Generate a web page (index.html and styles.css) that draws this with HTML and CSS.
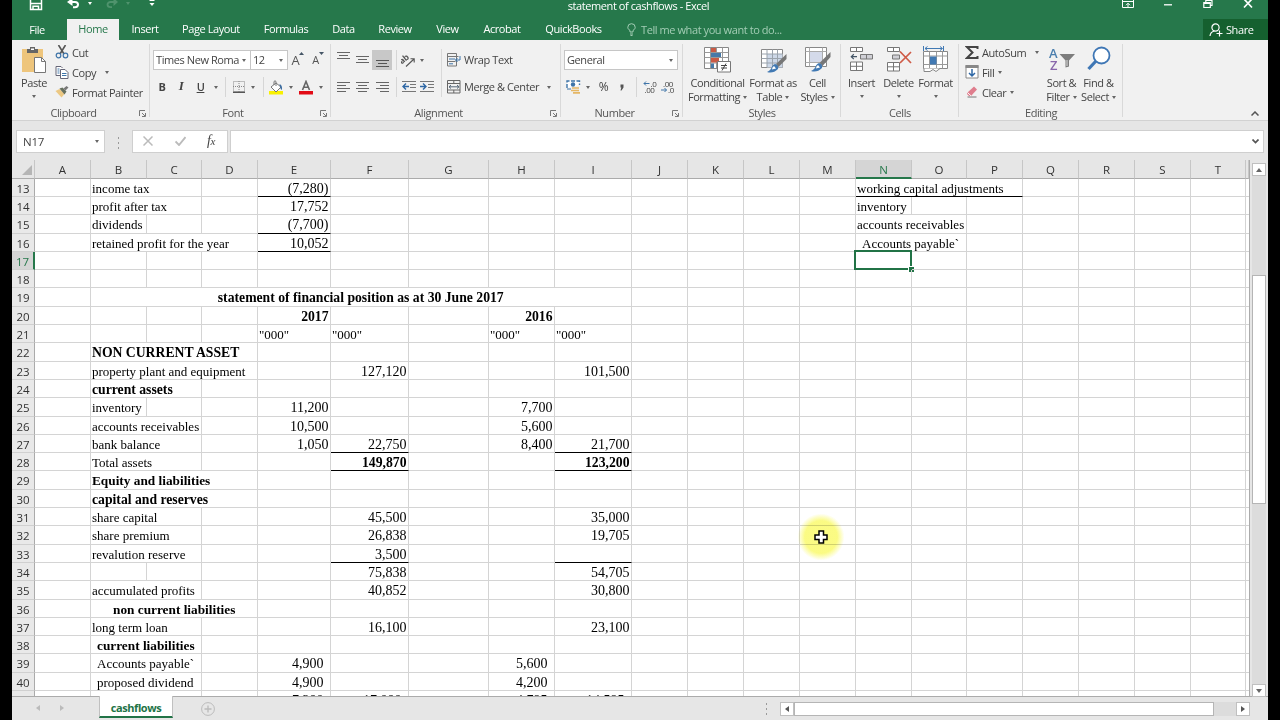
FILE: index.html
```html
<!DOCTYPE html>
<html lang="en">
<head>
    <meta charset="utf-8">
    <title>statement of cashflows - Excel</title>
    <link rel="stylesheet" href="styles.css">
</head>
<body>
<div class="app">

    <!-- title bar -->
    <div class="titlebar">
        <div class="quick">
            <svg width="14" height="19" viewBox="0 0 14 19"><path d="M1.5 -1V9.500H12.500V-1M1.500 3.500H12.500" fill="none" stroke="#fff" stroke-width="1.500"/><path d="M4 9.500V6.200h5.500v3.300" fill="none" stroke="#fff" stroke-width="1.500"/></svg>
            <svg class="undo" width="14" height="19" viewBox="0 0 14 19"><path d="M2.500 2H8a3 2.600 0 0 1 0 5.200H6" fill="none" stroke="#fff" stroke-width="2"/><path d="M0 2L5.500 -2V6z" fill="#fff"/></svg>
            <i class="caret white"></i>
            <svg class="redo" width="14" height="19" viewBox="0 0 14 19"><path d="M11 2H5.500a3 2.600 0 0 0 0 5.200H7" fill="none" stroke="#4f936d" stroke-width="1.800"/><path d="M13 2L8.500 -2V6z" fill="#4f936d"/></svg>
            <i class="caret faded"></i>
            <svg class="more" width="6" height="8" viewBox="0 0 6 8"><path d="M0.500 1.500h5" stroke="#fff"/><path d="M0.500 4h5L3 7z" fill="#fff"/></svg>
        </div>
        <div class="title">statement of cashflows - Excel</div>
        <div class="window">
            <svg width="12" height="19" viewBox="0 0 12 19"><path d="M.500 -.500h11v8H.500zM.500 1.500h11" fill="none" stroke="#fff"/><path d="M6 7V3.500M4 5.200l2-2 2 2" fill="none" stroke="#fff"/></svg>
            <svg width="10" height="19" viewBox="0 0 10 19"><path d="M1 4.800h8" stroke="#fff" stroke-width="1.300"/></svg>
            <svg width="10" height="19" viewBox="0 0 10 19"><path d="M.800 2.500h6.500v5H.800zM.800 3.300h6.500M2.800 2V.500h6.200v5H7.500" fill="none" stroke="#fff" stroke-width="1.200"/></svg>
            <svg width="10" height="19" viewBox="0 0 10 19"><path d="M1 -1L9 7.500M9 -1L1 7.500" stroke="#fff" stroke-width="1.700"/></svg>
        </div>
    </div>

    <!-- ribbon tabs -->
    <div class="tabs">
        <div class="tab file">File</div>
        <div class="tab active">Home</div>
        <div class="tab">Insert</div>
        <div class="tab">Page Layout</div>
        <div class="tab">Formulas</div>
        <div class="tab">Data</div>
        <div class="tab">Review</div>
        <div class="tab">View</div>
        <div class="tab">Acrobat</div>
        <div class="tab">QuickBooks</div>
        <div class="tell">
            <svg width="9" height="13" viewBox="0 0 9 13"><path d="M3 9V7.500C1.500 6.500.800 5.500.800 4.300a3.700 3.600 0 0 1 7.400 0C8.200 5.500 7.500 6.500 6 7.500V9zM3 11h3M3.500 12.500h2" fill="none" stroke="#a3cdb5"/></svg>
            <span>Tell me what you want to do...</span>
        </div>
        <div class="share">
            <svg width="14" height="14" viewBox="0 0 14 14"><circle cx="6.500" cy="4.500" r="3.600" fill="none" stroke="#fff" stroke-width="1.200"/><path d="M1 13c.300-3 2-4.500 4.500-5M10.500 7.500v6M7.500 10.500h6" fill="none" stroke="#fff" stroke-width="1.200"/></svg>
            <span>Share</span>
        </div>
    </div>

    <!-- ribbon -->
    <div class="ribbon">
        <div class="group clipboard">
            <div class="tools">
                <div class="big">
                    <svg width="26" height="27" viewBox="0 0 26 27"><path d="M1 3h21v23H1z" fill="#eec57c"/><path d="M6 3h3V1h5v2h3v4H6z" fill="#666"/><path d="M10 2.500h3v1.500h-3z" fill="#fff"/><path d="M13.500 11.500h7l4 4v11h-11z" fill="#fff" stroke="#777"/><path d="M20.500 11.500v4h4" fill="none" stroke="#777"/></svg>
                    <span>Paste</span>
                    <i class="caret"></i>
                </div>
                <div class="stack">
                    <div class="line"><svg width="13" height="14" viewBox="0 0 13 14"><path d="M3 0l5.500 9M10 0L4.500 9" stroke="#555" stroke-width="1.600"/><circle cx="3" cy="10.500" r="2.300" fill="none" stroke="#3e74a8" stroke-width="1.200"/><circle cx="10" cy="10.500" r="2.300" fill="none" stroke="#3e74a8" stroke-width="1.200"/></svg><span>Cut</span></div>
                    <div class="line"><svg width="14" height="13" viewBox="0 0 14 13"><path d="M6 9.500H1V.500h5l1.500 1.500" fill="#fff" stroke="#667"/><path d="M2.500 3h2M2.500 5h2M2.500 7h2" stroke="#3e74a8"/><path d="M5.500 3.500h4.500l3 3v6H5.500z" fill="#fff" stroke="#667"/><path d="M7 7.500h4.500M7 9.500h4.500" stroke="#3e74a8"/></svg><span>Copy</span><i class="caret copy"></i></div>
                    <div class="line"><svg width="13" height="12" viewBox="0 0 13 12"><path d="M0 5l4-2 5 5-3 3.500z" fill="#ecc883"/><path d="M4 2.500l3-1 4 4-2 3z" fill="#66705f"/><path d="M8 2.500L11 0l2 1.500-3 3z" fill="#777"/></svg><span>Format Painter</span></div>
                </div>
            </div>
            <div class="label"><span>Clipboard</span><svg class="corner" width="7" height="7" viewBox="0 0 7 7"><path d="M.500 6V.500H6M3 3l3 3M6.500 3v3.500H3" fill="none" stroke="#777"/></svg></div>
        </div>

        <div class="group font">
            <div class="tools rows">
                <div class="row font-top">
                    <div class="combo"><span>Times New Roma</span><i class="caret"></i></div>
                    <div class="combo size"><span>12</span><i class="caret"></i></div>
                    <div class="grow">A<svg width="5" height="4" viewBox="0 0 5 4"><path d="M0 3l2.500-3L5 3z" fill="#456"/></svg></div>
                    <div class="grow small">A<svg width="5" height="4" viewBox="0 0 5 4"><path d="M0 0l2.500 3L5 0z" fill="#456"/></svg></div>
                </div>
                <div class="row font-bottom">
                    <b>B</b><em>I</em><u>U</u><i class="caret"></i><i class="sep"></i>
                    <svg width="12" height="12" viewBox="0 0 12 12"><path d="M.500 .500h11v10H.500zM6 0v11M0 5.500h12" fill="none" stroke="#888" stroke-dasharray="1 1"/><path d="M0 11.300h12" stroke="#555" stroke-width="1.400"/></svg>
                    <i class="caret"></i><i class="sep"></i>
                    <svg width="15" height="15" viewBox="0 0 15 15"><path d="M0 11h14v3.500H0z" fill="#f8f000"/><path d="M2 7l5-4 5 4-5 5z" fill="#fff" stroke="#777"/><path d="M5 5V1.500q1-1.500 2 0V6" fill="none" stroke="#777"/><path d="M10.500 4q3 1 2.500 6-1.500 0-2-3z" fill="#3e6da0"/></svg>
                    <i class="caret"></i>
                    <svg width="14" height="15" viewBox="0 0 14 15"><path d="M3.500 10L7 1.500 10.500 10M4.800 7.300h4.500" fill="none" stroke="#666" stroke-width="1.600"/><path d="M0 11h14v3.500H0z" fill="#e20b16"/></svg>
                    <i class="caret"></i>
                </div>
            </div>
            <div class="label"><span>Font</span><svg class="corner" width="7" height="7" viewBox="0 0 7 7"><path d="M.500 6V.500H6M3 3l3 3M6.500 3v3.500H3" fill="none" stroke="#777"/></svg></div>
        </div>

        <div class="group align">
            <div class="tools">
                <div class="rows align-left">
                    <div class="row align-top">
                        <svg width="13" height="20" viewBox="0 0 13 20"><path d="M0 2.500h13M2 5.500h9M0 8.500h13" stroke="#666"/></svg>
                        <svg width="13" height="20" viewBox="0 0 13 20"><path d="M0 6.500h13M2 9.500h9M0 12.500h13" stroke="#666"/></svg>
                        <span class="pressed"><svg width="13" height="20" viewBox="0 0 13 20"><path d="M0 10.500h13M2 13.500h9M0 16.500h13" stroke="#555"/></svg></span>
                        <i class="sep"></i>
                        <svg width="15" height="13" viewBox="0 0 15 13"><text x="0" y="8" font-size="8.500" font-weight="bold" fill="#555" transform="rotate(-38 4 8)">ab</text><path d="M5 12.500L13 5M9.500 4.800h3.700v3.700" fill="none" stroke="#555" stroke-width="1.100"/></svg>
                        <i class="caret"></i>
                    </div>
                    <div class="row align-bottom">
                        <svg width="13" height="11" viewBox="0 0 13 11"><path d="M0 .500h13M0 3.500h9M0 6.500h13M0 9.500h9" stroke="#666"/></svg>
                        <svg width="13" height="11" viewBox="0 0 13 11"><path d="M0 .500h13M2 3.500h9M0 6.500h13M2 9.500h9" stroke="#666"/></svg>
                        <svg width="13" height="11" viewBox="0 0 13 11"><path d="M0 .500h13M4 3.500h9M0 6.500h13M4 9.500h9" stroke="#666"/></svg>
                        <i class="sep"></i>
                        <svg width="14" height="12" viewBox="0 0 14 12"><path d="M0 .500h14M8 3.500h6M8 6.500h6M0 10.500h14" stroke="#777"/><path d="M1 5.500h6M4 2.500l-3 3 3 3" fill="none" stroke="#2e67a5" stroke-width="1.400"/></svg>
                        <svg width="14" height="12" viewBox="0 0 14 12"><path d="M0 .500h14M8 3.500h6M8 6.500h6M0 10.500h14" stroke="#777"/><path d="M0 5.500h6M3 2.500l3 3-3 3" fill="none" stroke="#2e67a5" stroke-width="1.400"/></svg>
                    </div>
                </div>
                <div class="rows align-right">
                    <div class="row wrap"><svg width="14" height="14" viewBox="0 0 14 14"><path d="M.500 .500h9v12.500h-9zM.500 3.500h11M.500 8.500h8" fill="none" stroke="#777"/><path d="M2 6h6M2 10.800h4" stroke="#3e74a8"/><path d="M13 3v4H8.500M10.500 5l-2 2 2 2" fill="none" stroke="#3e74a8"/></svg><span>Wrap Text</span></div>
                    <div class="row wrap"><svg width="14" height="14" viewBox="0 0 14 14"><path d="M.500 .500h12.500v12.500H.500zM.500 3.500h12.500M.500 10h12.500M6.800 .500v3M6.800 10v3" fill="none" stroke="#666"/><path d="M2 6.800h10M4 5L2 6.800 4 8.500M10 5l2 1.800L10 8.500" fill="none" stroke="#567"/></svg><span>Merge &amp; Center</span><i class="caret"></i></div>
                </div>
            </div>
            <div class="label"><span>Alignment</span><svg class="corner" width="7" height="7" viewBox="0 0 7 7"><path d="M.500 6V.500H6M3 3l3 3M6.500 3v3.500H3" fill="none" stroke="#777"/></svg></div>
        </div>

        <div class="group number">
            <div class="tools rows">
                <div class="row"><div class="combo general"><span>General</span><i class="caret"></i></div></div>
                <div class="row number-bottom">
                    <svg width="15" height="14" viewBox="0 0 15 14"><path d="M1 8V1h12.500v4" fill="#fff" stroke="#3e74a8" stroke-width="1.400" stroke-dasharray="4 1.500"/><circle cx="7" cy="4.500" r="2.200" fill="#3e74a8"/><path d="M6 8h7M5 10.500h8M7 12.800h7" stroke="#e5b765" stroke-width="1.700"/><path d="M1 9h4" stroke="#3e74a8"/></svg>
                    <i class="caret"></i>
                    <span class="percent">%</span>
                    <svg width="4" height="7" viewBox="0 0 4 7"><path d="M.500 .500h3v3L1.500 6.500H.500l.800-3H.500z" fill="#555"/></svg>
                    <i class="sep"></i>
                    <svg width="14" height="14" viewBox="0 0 14 14"><text x="7.500" y="6.500" font-size="8" fill="#444">.0</text><text x="1.500" y="13" font-size="8" fill="#444">.00</text><path d="M1 3.500h5.500M3 1.500l-2 2 2 2" fill="none" stroke="#3e74a8"/></svg>
                    <svg width="14" height="14" viewBox="0 0 14 14"><text x="2" y="6.500" font-size="8" fill="#444">.00</text><text x="7" y="13" font-size="8" fill="#444">.0</text><path d="M0 10h5.500M3.500 8l2 2-2 2" fill="none" stroke="#3e74a8"/></svg>
                </div>
            </div>
            <div class="label"><span>Number</span><svg class="corner" width="7" height="7" viewBox="0 0 7 7"><path d="M.500 6V.500H6M3 3l3 3M6.500 3v3.500H3" fill="none" stroke="#777"/></svg></div>
        </div>

        <div class="group styles">
            <div class="tools">
                <div class="big">
                    <svg width="27" height="27" viewBox="0 0 27 27"><path d="M.500 1.500h24v21H.500z" fill="#fff" stroke="#888"/><path d="M.500 6.500h24M.500 11.500h24M.500 17h24M6.500 1.500v21M12.500 1.500v21M18.500 1.500v21" stroke="#999"/><path d="M7 2h5v4H7z" fill="#ca5b45"/><path d="M7 7h10v4H7z" fill="#4779a8"/><path d="M7 12h8v4.500H7z" fill="#ca5b45"/><path d="M7 17.500h3v4.500H7z" fill="#4779a8"/><path d="M13.500 15.500h13v10.500h-13z" fill="#fff" stroke="#777"/><path d="M17 19.500h6M17 22h6M22 17.500l-4 7" stroke="#444"/></svg>
                    <span>Conditional<br>Formatting<i class="caret"></i></span>
                </div>
                <div class="big">
                    <svg width="27" height="27" viewBox="0 0 27 27"><path d="M1.500 3.500h21v18h-21z" fill="#fff" stroke="#888"/><path d="M7 8h15.500v13.500H7z" fill="#cdd8e8"/><path d="M1.500 8h21M1.500 12.500h21M1.500 17h21M7 3.500v18M12.500 3.500v18M17.500 3.500v18" stroke="#9aa3ad"/><path d="M26.500 8v5l-8 8-2.500-3z" fill="#777"/><path d="M15 18q4 1 3 5-5 5-11 3 4-2 5-5.500 1-2 3-2.500z" fill="#4179b3"/><path d="M14 20q-2 1-2 3.500l4-1z" fill="#fff"/></svg>
                    <span>Format as<br>Table<i class="caret"></i></span>
                </div>
                <div class="big">
                    <svg width="27" height="27" viewBox="0 0 27 27"><path d="M1.500 1.500h21v19h-21z" fill="#fff" stroke="#888"/><path d="M5.500 5.500h13v11h-13z" fill="#d4daea" stroke="#999"/><path d="M1.500 5.500h21M1.500 16.500h21M5.500 1.500v19M18.500 1.500v19" stroke="#aaa"/><path d="M26.500 6v5l-8 9-3-3z" fill="#777"/><path d="M15 17q4 1 3 5-5 5-11 3 4-2 5-5.500 1-2 3-2.500z" fill="#4179b3"/><path d="M14 19q-2 1-2 3.500l4-1z" fill="#fff"/></svg>
                    <span>Cell<br>Styles<i class="caret"></i></span>
                </div>
            </div>
            <div class="label"><span>Styles</span></div>
        </div>

        <div class="group cells">
            <div class="tools">
                <div class="big">
                    <svg width="25" height="27" viewBox="0 0 25 27"><path d="M1.500 1.500h12v4h-12zM7.500 1.500v4M1.500 16h12v8.500h-12zM7.500 16v8.500M1.500 20.300h12" fill="#fff" stroke="#777"/><path d="M11.500 8.500h12v4.500h-12zM17.500 8.500V13" fill="#d0d0d6" stroke="#777"/><path d="M2 10.700h6M4.800 8.300L2.300 10.700l2.500 2.400" fill="none" stroke="#456" stroke-width="1.200"/></svg>
                    <span>Insert</span><i class="caret"></i>
                </div>
                <div class="big">
                    <svg width="27" height="27" viewBox="0 0 27 27"><path d="M2.500 1.500h12v4h-12zM8.500 1.500v4M2.500 16.500h12v8.500h-12zM8.500 16.500V25M2.500 20.800h12" fill="#fff" stroke="#777"/><path d="M7.500 9h7v4h-7z" fill="#d0d0d6" stroke="#777"/><path d="M15 5.500l11 11.500M26 6L15 17" stroke="#cf5b47" stroke-width="1.700"/></svg>
                    <span>Delete</span><i class="caret"></i>
                </div>
                <div class="big">
                    <svg width="26" height="27" viewBox="0 0 26 27"><path d="M.500 5.500h24v17H.500z" fill="#fff" stroke="#888"/><path d="M.500 10h24M.500 18.500h24M6.500 5.500v17M13.500 5.500v17M19.500 5.500v17" stroke="#999"/><path d="M7 10.500h6.500v8H7z" fill="#4179b3"/><path d="M2 2.500h17M4.500 .500L2 2.500l2.500 2M17 .500l2.500 2-2.500 2M.500 0v5M20.500 0v5" fill="none" stroke="#4179b3"/><path d="M1 22.500v3h6l3-2 3 2 4-3" fill="#fff" stroke="#888"/></svg>
                    <span>Format</span><i class="caret"></i>
                </div>
            </div>
            <div class="label"><span>Cells</span></div>
        </div>

        <div class="group editing">
            <div class="tools">
                <div class="stack">
                    <div class="line"><svg width="13" height="13" viewBox="0 0 13 13"><path d="M12 3V1H1.500L7 6.500 1.500 12H12v-2" fill="none" stroke="#444" stroke-width="2"/></svg><span>AutoSum</span><i class="caret auto"></i></div>
                    <div class="line"><svg width="13" height="14" viewBox="0 0 13 14"><path d="M.500 .500h12v12.500H.500z" fill="#fff" stroke="#888"/><path d="M0 0h13v3H0z" fill="#888"/><path d="M6.500 4v7M3.500 8l3 3 3-3" fill="none" stroke="#2e67a5" stroke-width="1.500"/></svg><span>Fill</span><i class="caret"></i></div>
                    <div class="line"><svg width="13" height="12" viewBox="0 0 13 12"><path d="M2 6.500L8.500 .500l3 3L5.500 10H3.500L1.500 8z" fill="#df7d8d"/><path d="M2 6.500l3.500 3.300" stroke="#fff"/><path d="M2 11h9" stroke="#777"/></svg><span>Clear</span><i class="caret"></i></div>
                </div>
                <div class="big">
                    <svg width="27" height="27" viewBox="0 0 27 27"><text x="1" y="11.500" font-size="13" font-weight="600" fill="#4b7fae">A</text><text x="2" y="24" font-size="13" font-weight="600" fill="#8967ab">Z</text><path d="M11.500 8h15.500l-6 6.500v6l-3.500 1v-7z" fill="#7d7d7d"/><path d="M19 14v6" stroke="#ddd"/></svg>
                    <span>Sort &amp;<br>Filter<i class="caret"></i></span>
                </div>
                <div class="big">
                    <svg width="26" height="27" viewBox="0 0 26 27"><circle cx="15.500" cy="9.500" r="8" fill="#fff" stroke="#3f77b5" stroke-width="1.800"/><path d="M10 15L2.500 23" stroke="#3f77b5" stroke-width="3.200"/></svg>
                    <span>Find &amp;<br>Select<i class="caret"></i></span>
                </div>
            </div>
            <div class="label"><span>Editing</span></div>
        </div>
        <svg class="collapse" width="8" height="5" viewBox="0 0 8 5"><path d="M.500 4.500L4 1l3.500 3.500" fill="none" stroke="#555" stroke-width="1.500"/></svg>
    </div>

    <!-- formula bar -->
    <div class="formula">
        <div class="namebox"><span>N17</span><i class="caret"></i></div>
        <div class="dots"><i></i><i></i><i></i></div>
        <div class="fx">
            <svg width="10" height="10" viewBox="0 0 10 10"><path d="M.500 .500l9 9M9.500 .500l-9 9" stroke="#bbb" stroke-width="1.500"/></svg>
            <svg width="11" height="10" viewBox="0 0 11 10"><path d="M.500 5.500L4 9l6.500-8" fill="none" stroke="#bbb" stroke-width="1.900"/></svg>
            <span>f<small>x</small></span>
        </div>
        <div class="input"><svg width="7" height="5" viewBox="0 0 7 5"><path d="M.500 .500l3 3 3-3" fill="none" stroke="#555" stroke-width="1.700"/></svg></div>
    </div>

    <!-- sheet -->
    <div class="sheet">
        <div class="grid" id="grid"></div>
        <div class="vscroll">
            <div class="arrow"><i class="up"></i></div>
            <div class="track"><div class="thumb"></div></div>
            <div class="arrow"><i class="down"></i></div>
        </div>
        <div class="pointer">
            <svg width="14" height="14" viewBox="0 0 14 14"><path d="M5 1h4.500v4H13v4.500H9.500V13H5V9.500H1V5h4z" fill="#fff" stroke="#000" stroke-width="1.500"/></svg>
        </div>
    </div>

    <!-- sheet tabs -->
    <div class="bottom">
        <i class="prev"></i><i class="next"></i>
        <div class="sheet-tab">cashflows</div>
        <svg class="add" width="14" height="14" viewBox="0 0 14 14"><circle cx="7" cy="7" r="6.400" fill="none" stroke="#bbb"/><path d="M7 3.500v7M3.500 7h7" stroke="#bbb" stroke-width="1.300"/></svg>
        <div class="dots"><i></i><i></i><i></i></div>
        <div class="hscroll">
            <div class="arrow"><i class="left"></i></div>
            <div class="thumb"></div>
            <div class="arrow end"><i class="right"></i></div>
        </div>
    </div>
</div>
<script src="sheet.js"></script>
</body>
</html>
```
FILE: styles.css
```css
* {
    box-sizing: border-box;
}
body {
    margin: 0;
    background: #000;
    font-family: "Open Sans", "Noto Sans", sans-serif;
    font-size: 11px;
    letter-spacing: -.42px;
    color: #444;
    overflow: hidden;
}
svg {
    display: block;
    flex-shrink: 0;
}
.app {
    width: 1256px;
    height: 720px;
    margin: 0 12px;
    background: #e6e6e6;
    overflow: hidden;
    display: flex;
    flex-direction: column;
}

/* small drop-down triangle */
.caret {
    display: inline-block;
    flex-shrink: 0;
    border: 2.5px solid transparent;
    border-top: 3px solid #666;
    border-bottom: 0;
}
.caret.white {
    border-top-color: #fff;
}
.caret.faded {
    border-top-color: #4f936d;
}
.sep {
    width: 1px;
    height: 20px;
    background: #d6d6d6;
}

/* title bar */
.titlebar {
    height: 19px;
    background: #26784b;
    display: grid;
    grid-template-columns: 300px 1fr 300px;
    color: #fff;
}
.quick {
    display: flex;
    padding-left: 17px;
}
.quick .caret {
    margin: 2px 0 0 7px;
}
.undo {
    margin-left: 24px;
}
.redo {
    margin-left: 13px;
}
.more {
    margin: -1px 0 0 19px;
}
.title {
    text-align: center;
    line-height: 11px;
    padding-right: 3px;
    white-space: nowrap;
}
.window {
    display: flex;
    justify-content: flex-end;
    padding-right: 15px;
}
.window svg {
    margin-left: 30px;
}
.window svg:nth-child(2) {
    margin-left: 29px;
}

/* tabs */
.tabs {
    height: 21px;
    flex-shrink: 0;
    background: #26784b;
    display: grid;
    grid-template-columns: 55px 52px 52px 80px 70px 45px 58px 47px 62px 81px 1fr 65px;
    line-height: 20px;
    color: #fff;
}
.tab {
    text-align: center;
    white-space: nowrap;
}
.tab.file {
    padding: 1px 5px 0 0;
}
.tab.active {
    background: #f1f1f1;
    color: #26784b;
}
.tell {
    display: flex;
    align-items: center;
    padding-left: 13px;
    color: #a3cdb5;
}
.tell span {
    margin-left: 5px;
}
.share {
    background: #15602f;
    display: flex;
    align-items: center;
    padding-left: 6px;
}
.share span {
    margin-left: 3px;
}

/* ribbon */
.ribbon {
    height: 81px;
    flex-shrink: 0;
    background: #f1f1f1;
    border-bottom: 1px solid #d2d2d2;
    display: flex;
}
.group {
    height: 80px;
    display: flex;
    flex-direction: column;
    position: relative;
}
.group::after {
    content: "";
    position: absolute;
    right: 0;
    top: 4px;
    width: 1px;
    height: 73px;
    background: #d9d9d9;
}
.clipboard { width: 138px; }
.font { width: 181px; }
.align { width: 230px; }
.number { width: 122px; }
.styles { width: 158px; }
.cells { width: 118px; }
.editing { width: 164px; }
.tools {
    height: 66px;
    display: flex;
}
.label {
    height: 14px;
    line-height: 14px;
    text-align: center;
    position: relative;
    color: #555;
}
.clipboard .label, .font .label, .align .label, .number .label {
    padding-right: 15px;
}
.corner {
    position: absolute;
    right: 4px;
    top: 4px;
}
.rows {
    flex-direction: column;
    gap: 7px;
    padding: 10px 0 0 3px;
}
.row {
    height: 20px;
    display: grid;
    align-items: center;
    justify-items: center;
}
.row span, .row b, .row u, .row em {
    padding-bottom: 2px;
}
.big {
    display: flex;
    flex-direction: column;
    align-items: center;
    padding-top: 6px;
    line-height: 14px;
    text-align: center;
    white-space: nowrap;
}
.big span {
    margin-top: 3px;
}
.big > .caret {
    margin-top: 5px;
}
.big span .caret {
    margin: 0 0 2px 3px;
}
.stack {
    padding-top: 2px;
}
.line {
    height: 20px;
    display: flex;
    align-items: center;
    white-space: nowrap;
}
.line svg {
    width: 14px;
}
.line span {
    margin-left: 3px;
}
.line .caret {
    margin-left: 4px;
}
.line .caret.copy, .line .caret.auto {
    margin-left: 9px;
}
.clipboard .big {
    width: 43px;
    padding-left: 1px;
}
.combo {
    height: 20px;
    width: 100%;
    background: #fff;
    border: 1px solid #c6c6c6;
    display: flex;
    align-items: center;
    justify-content: space-between;
    padding: 0 4px 0 2px;
    white-space: nowrap;
}
.combo.size {
    border-left: 0;
}
.general {
    width: 114px;
    justify-self: start;
}
.font-top {
    grid-template-columns: 98px 37px 20px 20px;
}
.grow {
    display: flex;
    font-size: 13px;
    line-height: 20px;
    color: #555;
}
.grow.small {
    font-size: 11px;
}
.grow svg {
    margin-top: 2px;
}
.font-bottom {
    grid-template-columns: 18px 20px 19px 11px 9px 17px 12px 8px 19px 9px 21px 9px;
}
.font-bottom em {
    font-family: "Liberation Serif", serif;
    font-weight: bold;
    font-size: 13px;
}
.font-bottom u {
    font-weight: 600;
}
.align-left {
    display: flex;
    width: 110px;
}
.align-top {
    grid-template-columns: 18px 20px 20px 8px 17px 10px;
}
.align-bottom {
    grid-template-columns: 18px 20px 20px 8px 17px 20px;
}
.row .pressed {
    background: #c8c8c8;
    width: 20px;
    height: 20px;
    padding: 0 0 0 4px;
}
.align-right {
    display: flex;
    padding-left: 6px;
    background: linear-gradient(#d9d9d9, #d9d9d9) no-repeat 0 9px / 1px 48px;
}
.wrap {
    grid-template-columns: 17px auto 1fr;
    justify-items: start;
    white-space: nowrap;
}
.wrap .caret {
    margin-left: 8px;
}
.number-bottom {
    grid-template-columns: 18px 12px 19px 18px 11px 15px 22px;
}
.percent {
    font-size: 12px;
}
.styles .tools {
    padding-left: 5px;
}
.styles .big:nth-child(1) { width: 59px; }
.styles .big:nth-child(2) { width: 52px; }
.styles .big:nth-child(3) { width: 37px; }
.cells .tools {
    padding-left: 2px;
}
.cells .big { width: 37px; }
.editing .tools {
    padding-left: 6px;
}
.editing .stack { width: 78px; }
.editing .big { width: 37px; }
.collapse {
    margin: 71px 0 0 128px;
}

/* formula bar */
.formula {
    height: 39px;
    flex-shrink: 0;
    display: flex;
    padding: 9px 4px 0;
}
.namebox, .fx, .input {
    height: 23px;
    background: #fff;
    border: 1px solid #cfcfcf;
    display: flex;
    align-items: center;
}
.namebox {
    width: 89px;
    padding: 0 5px 1px 6px;
    justify-content: space-between;
    font-size: 11.5px;
    letter-spacing: -.2px;
}
.dots {
    display: flex;
    flex-direction: column;
    gap: 3px;
}
.dots i {
    width: 1px;
    height: 2px;
    background: #999;
}
.formula .dots {
    margin: 7px 13px 0;
}
.fx {
    width: 96px;
    padding: 0 0 1px 10px;
}
.fx svg + svg {
    margin-left: 22px;
}
.fx span {
    margin-left: 21px;
    font: italic 14px "Liberation Serif", serif;
}
.fx small {
    font-size: 11px;
}
.input {
    margin-left: 2px;
    flex: 1;
    justify-content: flex-end;
    padding-right: 4px;
}

/* sheet */
.sheet {
    height: 537px;
    flex-shrink: 0;
    display: flex;
    position: relative;
    border-bottom: 1px solid #ababab;
    letter-spacing: 0;
}
.grid {
    width: 1238px;
    overflow: hidden;
    border-right: 1px solid #ababab;
}
.grid-row {
    height: 18.3px;
    display: grid;
    grid-template-rows: 100%;
    grid-template-columns: 23px 56px 56px 55px 56px 73px 78px 80px 66px 77px 56px 56px 56px 56px 56px 55px 56px 56px 56px 56px 55px 3px;
    background: #fff;
}
.grid-head {
    height: 18.7px;
    background: #e6e6e6;
}
.head, .num {
    font-size: 11.5px;
    text-align: center;
    color: #333;
    line-height: 19px;
    border-bottom: 1px solid #ababab;
    border-right: 1px solid #c6c6c6;
}
.head {
    line-height: 20px;
}
.num {
    background: #e9e9e9;
    border-bottom-color: #d0d0d0;
    border-right-color: #ababab;
}
.head.on {
    background: #d5d5d5;
    color: #26784b;
    border-bottom: 2px solid #26784b;
}
.num.on {
    background: #d5d5d5;
    color: #26784b;
    border-right: 2px solid #26784b;
}
.corner-cell {
    border-bottom: 1px solid #ababab;
    border-right: 1px solid #c6c6c6;
    display: flex;
    justify-content: flex-end;
    align-items: flex-end;
    padding: 0 2px 3px 0;
}
.corner-cell i {
    border: 5px solid #b5b5b5;
    border-top-color: transparent;
    border-left-color: transparent;
}
.cell {
    min-width: 0;
    position: relative;
    border-right: 1px solid #d4d4d4;
    border-bottom: 1px solid #d4d4d4;
    font-family: "Liberation Serif", serif;
    font-size: 13px;
    line-height: 19px;
    color: #000;
    padding: 0 1.5px 0 1px;
    white-space: pre;
}
.r { text-align: right; font-size: 14px; }
.c { text-align: center; }
.b { font-weight: bold; font-size: 13.7px; }
.s { font-size: 13.3px; }
.acc { padding-right: 6.5px; }
.in { padding-left: 6px; }
.in2 { padding-left: 22px; }
.u { border-bottom-color: #000; }

/* active cell */
.sel::before {
    content: "";
    position: absolute;
    left: -2px;
    top: -2px;
    right: -1px;
    bottom: -1px;
    border: 2px solid #217346;
}
.sel::after {
    content: "";
    position: absolute;
    right: -3px;
    bottom: -3px;
    width: 5px;
    height: 5px;
    background: #217346;
    border: 1px solid #fff;
    border-width: 1px 0 0 1px;
}
.pointer {
    position: absolute;
    left: 786px;
    top: 354px;
    width: 46px;
    height: 46px;
    padding: 16px;
    background: radial-gradient(circle, rgba(250, 250, 110, .85) 50%, rgba(250, 250, 110, 0) 72%);
    mix-blend-mode: multiply;
}

/* scrollbars */
.vscroll {
    width: 14px;
    margin: 3px 0 -1px 2px;
    display: flex;
    flex-direction: column;
}
.arrow {
    height: 13px;
    background: #fff;
    border: 1px solid #c0c0c0;
    display: flex;
    align-items: center;
    justify-content: center;
}
.track {
    flex: 1;
    background: #dcdcdc;
    padding-top: 99px;
}
.vscroll .thumb {
    height: 229px;
    background: #fff;
    border: 1px solid #b5b5b5;
}
.up, .down {
    border: 3px solid transparent;
}
.up {
    border-bottom: 4px solid #666;
    border-top: 0;
}
.down {
    border-top: 4px solid #666;
    border-bottom: 0;
}
.left, .right, .prev, .next {
    border: 3.5px solid transparent;
}
.left, .prev {
    border-right: 4px solid #555;
    border-left: 0;
}
.right, .next {
    border-left: 4px solid #555;
    border-right: 0;
}

/* bottom bar */
.bottom {
    flex: 1;
    display: flex;
    align-items: flex-start;
}
.bottom .prev, .bottom .next {
    margin-top: 8px;
    border-top-width: 3px;
    border-bottom-width: 3px;
}
.bottom .prev {
    margin-left: 24px;
    border-right-color: #bbb;
}
.bottom .next {
    margin-left: 20px;
    border-left-color: #bbb;
}
.sheet-tab {
    width: 74px;
    height: 22px;
    margin: -1px 0 0 35px;
    background: #fff;
    border: 1px solid #c0c0c0;
    border-top: 0;
    border-bottom: 2px solid #217346;
    color: #217346;
    font-weight: bold;
    line-height: 23px;
    text-align: center;
    position: relative;
}
.add {
    margin: 5px 0 0 28px;
}
.bottom .dots {
    margin: 6px 0 0 551px;
}
.hscroll {
    width: 470px;
    height: 14px;
    margin: 5px 0 0 13px;
    background: #dcdcdc;
    display: flex;
}
.hscroll .arrow {
    width: 14px;
    height: 14px;
}
.hscroll .thumb {
    width: 420px;
    background: #fff;
    border: 1px solid #b5b5b5;
}
.hscroll .end {
    margin-left: auto;
}
```
FILE: sheet.js
```js
// row -> list of [column, text, span, classes]
var data = {
    13: [['B', 'income tax', 2], ['E', '(7,280)', 1, 'r u'], ['N', 'working capital adjustments', 3, 'u']],
    14: [['B', 'profit after tax', 2], ['E', '17,752', 1, 'r'], ['N', 'inventory', 1]],
    15: [['B', 'dividends', 1], ['E', '(7,700)', 1, 'r u'], ['N', 'accounts receivables', 2]],
    16: [['B', 'retained profit for the year', 3], ['E', '10,052', 1, 'r u'], ['N', 'Accounts payable`', 2, 'in']],
    17: [['N', '', 1, 'sel']],
    19: [['B', 'statement of financial position as at 30 June 2017', 8, 'b c']],
    20: [['E', '2017', 1, 'b r'], ['H', '2016', 1, 'b r']],
    21: [['E', '"000"', 1], ['F', '"000"', 1], ['H', '"000"', 1], ['I', '"000"', 1]],
    22: [['B', 'NON CURRENT ASSET', 3, 'b']],
    23: [['B', 'property plant and equipment', 3], ['F', '127,120', 1, 'r'], ['I', '101,500', 1, 'r']],
    24: [['B', 'current assets', 2, 'b']],
    25: [['B', 'inventory', 1], ['E', '11,200', 1, 'r'], ['H', '7,700', 1, 'r']],
    26: [['B', 'accounts receivables', 2], ['E', '10,500', 1, 'r'], ['H', '5,600', 1, 'r']],
    27: [['B', 'bank balance', 2], ['E', '1,050', 1, 'r'], ['F', '22,750', 1, 'r u'], ['H', '8,400', 1, 'r'], ['I', '21,700', 1, 'r u']],
    28: [['B', 'Total assets', 2], ['F', '149,870', 1, 'b r u'], ['I', '123,200', 1, 'b r u']],
    29: [['B', 'Equity and liabilities', 3, 'b s']],
    30: [['B', 'capital and reserves', 3, 'b']],
    31: [['B', 'share capital', 2], ['F', '45,500', 1, 'r'], ['I', '35,000', 1, 'r']],
    32: [['B', 'share premium', 2], ['F', '26,838', 1, 'r'], ['I', '19,705', 1, 'r']],
    33: [['B', 'revalution reserve', 2], ['F', '3,500', 1, 'r u'], ['I', '', 1, 'u']],
    34: [['F', '75,838', 1, 'r'], ['I', '54,705', 1, 'r']],
    35: [['B', 'accumulated profits', 2], ['F', '40,852', 1, 'r'], ['I', '30,800', 1, 'r']],
    36: [['B', 'non current liabilities', 3, 'b s in2']],
    37: [['B', 'long term loan', 2], ['F', '16,100', 1, 'r'], ['I', '23,100', 1, 'r']],
    38: [['B', 'current liabilities', 2, 'b s in']],
    39: [['B', 'Accounts payable`', 2, 'in'], ['E', '4,900', 1, 'r acc'], ['H', '5,600', 1, 'r acc']],
    40: [['B', 'proposed dividend', 2, 'in'], ['E', '4,900', 1, 'r acc'], ['H', '4,200', 1, 'r acc']],
    41: [['B', 'tax payable', 2, 'in'], ['E', '7,280', 1, 'r acc'], ['F', '17,080', 1, 'r acc'], ['H', '4,795', 1, 'r acc'], ['I', '14,595', 1, 'r acc']]
};
var cols = 'ABCDEFGHIJKLMNOPQRSTU';

function add(parent, cls, text) {
    var el = document.createElement('div');
    el.className = cls;
    el.textContent = text || '';
    parent.appendChild(el);
    return el;
}

var grid = document.getElementById('grid');
var head = add(grid, 'grid-row grid-head');
add(head, 'corner-cell').appendChild(document.createElement('i'));
for (var i = 0; i < cols.length; i++) {
    add(head, cols[i] === 'N' ? 'head on' : 'head', cols[i] === 'U' ? '' : cols[i]);
}

for (var n = 13; n <= 41; n++) {
    var row = add(grid, 'grid-row');
    add(row, n === 17 ? 'num on' : 'num', n === 41 ? '' : String(n));
    for (var c = 0; c < cols.length;) {
        var found = (data[n] || []).filter(function (d) { return d[0] === cols[c]; })[0];
        var span = found ? found[2] : 1;
        var cell = add(row, 'cell ' + (found && found[3] || ''), found ? found[1] : '');
        cell.style.gridColumn = 'span ' + span;
        c += span;
    }
}
```
